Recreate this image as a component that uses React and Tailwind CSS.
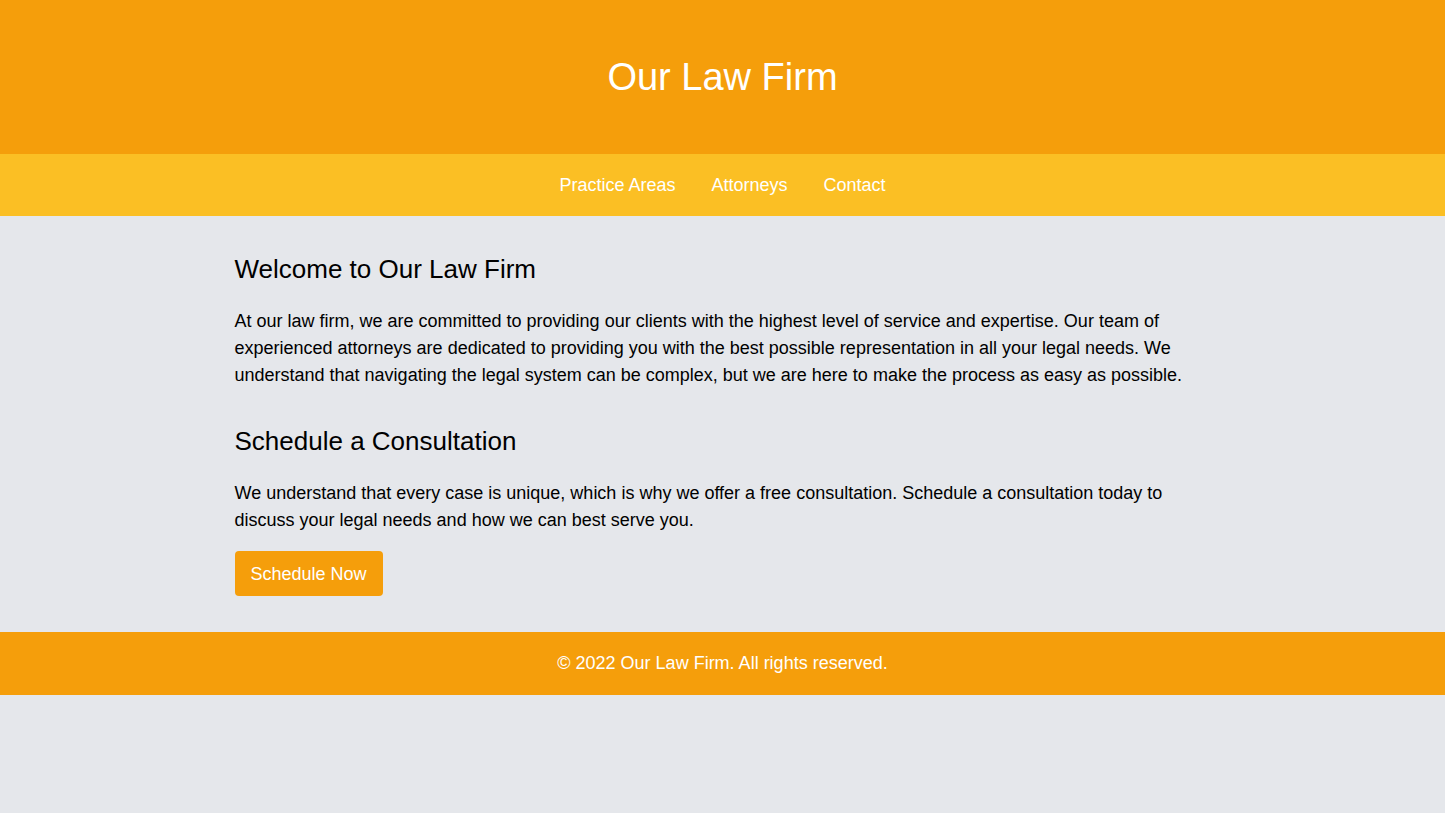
import React from 'react';

const App = () => {
  return (
    <div className="min-h-screen bg-[#e5e7eb] font-['Liberation_Sans',Arial,sans-serif]">
      {/* Header */}
      <header className="bg-[#f59e0b] pt-[57px] pb-[57px] text-center">
        <h1 className="text-[38px] leading-10 text-white">Our Law Firm</h1>
      </header>

      {/* Nav */}
      <nav className="bg-[#fbbf24] py-[17px]">
        <ul className="flex justify-center gap-9 text-lg text-white">
          <li><a href="#">Practice Areas</a></li>
          <li><a href="#">Attorneys</a></li>
          <li><a href="#">Contact</a></li>
        </ul>
      </nav>

      {/* Main content */}
      <main className="max-w-5xl mx-auto px-6 pt-[37px] pb-9">
        <section className="mb-9">
          <h2 className="text-[26px] leading-8 mb-[23px]">Welcome to Our Law Firm</h2>
          <p className="text-lg leading-[27px]">
            At our law firm, we are committed to providing our clients with the highest level of service and expertise. Our team of experienced attorneys are dedicated to providing you with the best possible representation in all your legal needs. We understand that navigating the legal system can be complex, but we are here to make the process as easy as possible.
          </p>
        </section>

        <section>
          <h2 className="text-[26px] leading-8 mb-[23px]">Schedule a Consultation</h2>
          <p className="text-lg leading-[27px] mb-[17px]">
            We understand that every case is unique, which is why we offer a free consultation. Schedule a consultation today to discuss your legal needs and how we can best serve you.
          </p>
          <button className="bg-[#f59e0b] text-white text-lg leading-7 px-4 py-2 h-[45px] rounded">
            Schedule Now
          </button>
        </section>
      </main>

      {/* Footer */}
      <footer className="bg-[#f59e0b] py-[17px] text-center text-lg leading-[29px] text-white">
        © 2022 Our Law Firm. All rights reserved.
      </footer>
    </div>
  );
};

export default App;
